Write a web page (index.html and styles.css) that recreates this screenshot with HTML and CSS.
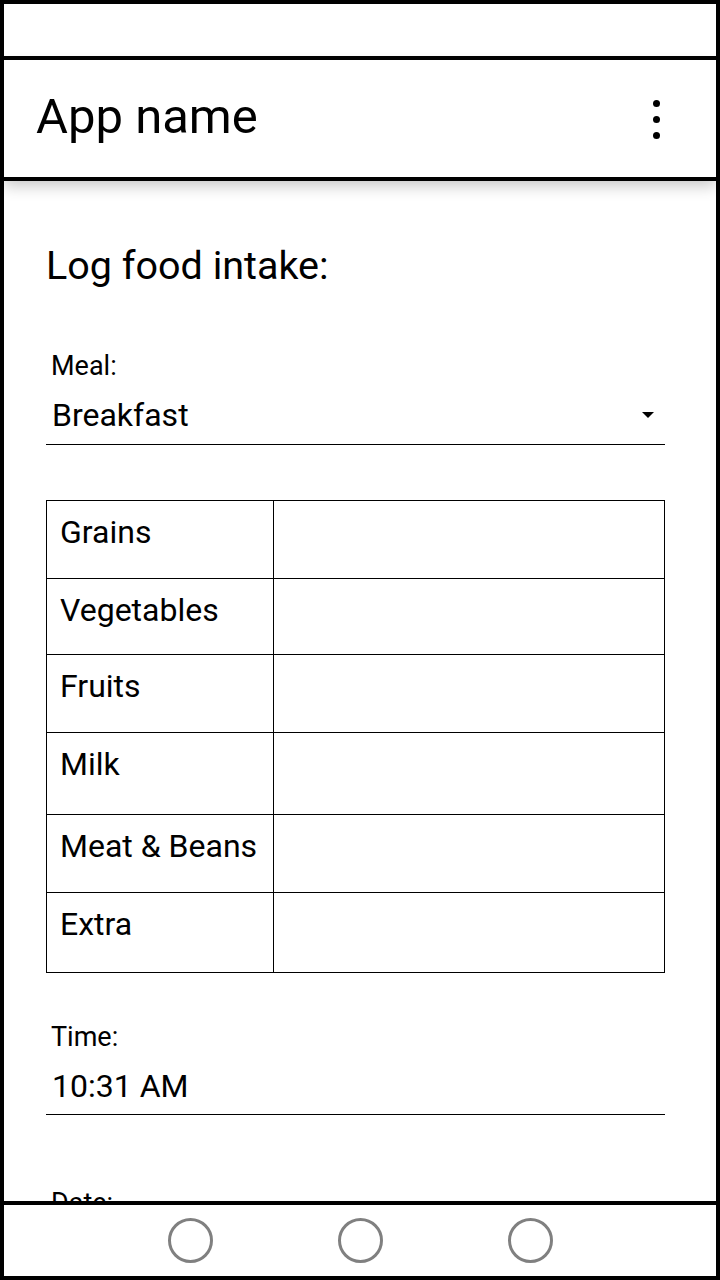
FILE: index.html
```html
<!DOCTYPE html>
<html>
<head>
<meta charset="utf-8">
<link rel="stylesheet" href="styles.css">
</head>
<body>
<div class="phone">
  <div class="status"></div>
  <header class="appbar">
    <div class="title">App name</div>
    <div class="more" aria-label="More options">
      <span class="dot"></span><span class="dot"></span><span class="dot"></span>
    </div>
  </header>
  <main class="content">
    <h1 class="heading">Log food intake:</h1>
    <div class="field">
      <div class="label">Meal:</div>
      <div class="input select">
        <span class="value">Breakfast</span>
        <span class="caret"></span>
      </div>
    </div>
    <table class="groups">
      <tr class="r1"><td class="name">Grains</td><td></td></tr>
      <tr class="r2"><td class="name">Vegetables</td><td></td></tr>
      <tr class="r3"><td class="name">Fruits</td><td></td></tr>
      <tr class="r4"><td class="name">Milk</td><td></td></tr>
      <tr class="r5"><td class="name">Meat &amp; Beans</td><td></td></tr>
      <tr class="r6"><td class="name">Extra</td><td></td></tr>
    </table>
    <div class="field time">
      <div class="label">Time:</div>
      <div class="input"><span class="value">10:31 AM</span></div>
    </div>
    <div class="field date">
      <div class="label">Date:</div>
    </div>
  </main>
  <nav class="navbar">
    <span class="navbtn"></span>
    <span class="navbtn"></span>
    <span class="navbtn"></span>
  </nav>
</div>
</body>
</html>
```
FILE: styles.css
```css
html, body {
  margin: 0;
  padding: 0;
  background: #fff;
}
body {
  font-family: Roboto, "Noto Sans", sans-serif;
  color: #000;
}
.phone {
  width: 720px;
  height: 1280px;
  box-sizing: border-box;
  border: 4px solid #000;
  display: flex;
  flex-direction: column;
  overflow: hidden;
  background: #fff;
}
.status {
  height: 52px;
  flex: none;
  border-bottom: 4px solid #000;
}
.appbar {
  flex: none;
  height: 113px;
  box-sizing: content-box;
  border-bottom: 4px solid #000;
  display: flex;
  align-items: center;
  justify-content: space-between;
  padding: 0 0 4px 32px;
  position: relative;
  z-index: 1;
  box-shadow: 0 5px 14px rgba(0, 0, 0, 0.22);
  background: #fff;
}
.title {
  font-size: 49px;
  line-height: normal;
}
.more {
  display: flex;
  flex-direction: column;
  gap: 9px;
  margin-right: 56px;
  margin-top: 6px;
}
.dot {
  width: 7px;
  height: 7px;
  border-radius: 50%;
  background: #000;
}
.content {
  flex: 1;
  overflow: hidden;
  padding: 61px 51px 0 42px;
}
.heading {
  margin: 0;
  font-size: 39.5px;
  font-weight: 400;
  line-height: normal;
}
.field {
  margin-top: 61px;
}
.label {
  font-size: 27px;
  line-height: normal;
  padding-left: 5px;
}
.input {
  margin-top: 14px;
  border-bottom: 1px solid #000;
  padding: 0 11px 10px 6px;
  display: flex;
  align-items: center;
  justify-content: space-between;
}
.value {
  font-size: 32px;
  line-height: normal;
}
.caret {
  width: 0;
  height: 0;
  border-left: 6px solid transparent;
  border-right: 6px solid transparent;
  border-top: 6px solid #000;
}
.groups {
  margin-top: 55px;
  width: 619px;
  border-collapse: collapse;
}
.groups td {
  border: 1px solid #000;
  padding: 12px 0 0 13px;
  vertical-align: top;
  font-size: 32px;
  line-height: normal;
}
.groups td.name {
  width: 213px;
}
.r1 { height: 78px; }
.r2 { height: 76px; }
.r3 { height: 78px; }
.r4 { height: 82px; }
.r5 { height: 78px; }
.r6 { height: 80px; }
.time {
  margin-top: 48px;
}
.time .input {
  padding-bottom: 9px;
}
.date {
  margin-top: 72px;
}
.navbar {
  height: 71px;
  flex: none;
  border-top: 4px solid #000;
  display: flex;
  align-items: center;
  justify-content: center;
  gap: 125px;
  background: #fff;
}
.navbtn {
  width: 45px;
  height: 45px;
  box-sizing: border-box;
  border: 3px solid #808080;
  border-radius: 50%;
}
```
